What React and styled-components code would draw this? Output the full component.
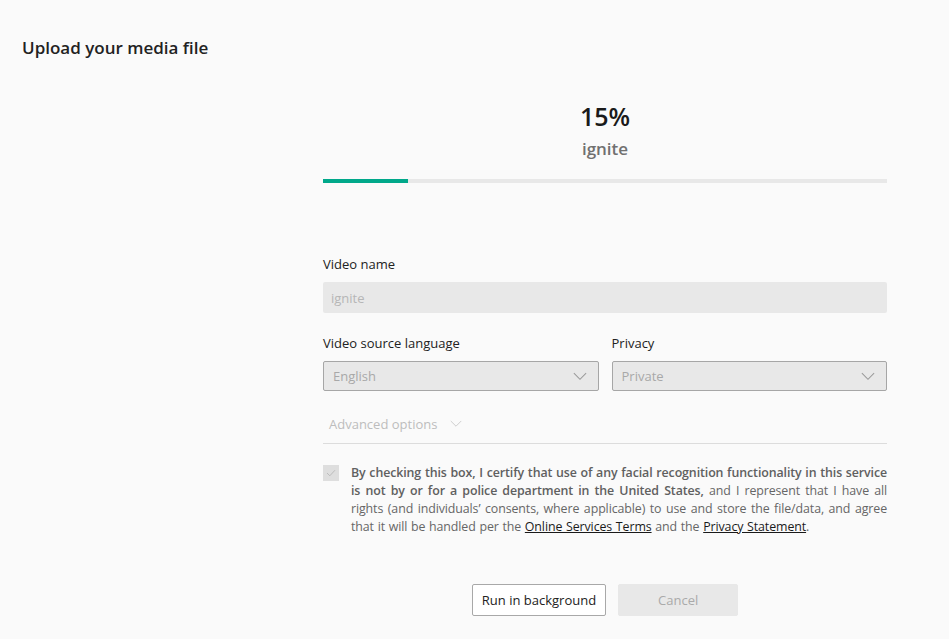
import React from "react";
import styled, { createGlobalStyle } from "styled-components";

const Global = createGlobalStyle`
  html, body {
    margin: 0;
    padding: 0;
    background: #fafafa;
    font-family: "Open Sans", "Noto Sans", sans-serif;
    color: #222;
  }
`;

const Page = styled.div`
  width: 949px;
  height: 639px;
  overflow: hidden;
  background: #fafafa;
`;

const Header = styled.h1`
  margin: 0;
  padding: 37px 0 0 22px;
  font-size: 17px;
  line-height: 22px;
  font-weight: 600;
  color: #222;
`;

const Main = styled.div`
  width: 564px;
  margin: 0 0 0 323px;
`;

const Status = styled.div`
  display: flex;
  flex-direction: column;
  align-items: center;
  padding-top: 40px;
`;

const Percent = styled.div`
  font-size: 25px;
  line-height: 34px;
  font-weight: 600;
  color: #1a1a1a;
`;

const FileName = styled.div`
  margin-top: 5px;
  font-size: 17px;
  line-height: 22px;
  font-weight: 600;
  color: #707070;
`;

const Track = styled.div`
  height: 4px;
  margin-top: 19px;
  background: #e8e8e8;
`;

const Fill = styled.div`
  height: 100%;
  background: #00a88a;
`;

const Form = styled.div`
  margin-top: 72px;
  display: flex;
  flex-direction: column;
`;

const Row = styled.div`
  display: grid;
  grid-template-columns: 1fr 1fr;
  gap: 13px;
  margin-top: ${(p) => p.$top || 0}px;
`;

const Field = styled.div`
  display: flex;
  flex-direction: column;
`;

const Label = styled.label`
  font-size: 13px;
  line-height: 18px;
  color: #222;
  margin-bottom: 9px;
`;

const Input = styled.div`
  height: 31px;
  box-sizing: border-box;
  padding: 0 8px;
  display: flex;
  align-items: center;
  background: #e8e8e8;
  border-radius: 2px;
  font-size: 13px;
  color: #b6b6b6;
`;

const Select = styled.div`
  height: 30px;
  box-sizing: border-box;
  padding: 0 11px 0 9px;
  display: flex;
  align-items: center;
  justify-content: space-between;
  background: #e8e8e8;
  border: 1px solid #a6a6a6;
  border-radius: 2px;
  font-size: 13px;
  color: #a8a8a8;
`;

const Chevron = ({ color = "#9a9a9a", size = 14 }) => (
  <svg width={size} height={size * 0.6} viewBox="0 0 16 9.6">
    <path d="M1 1.3 L8 8.3 L15 1.3" fill="none" stroke={color} strokeWidth="1.2" />
  </svg>
);

const Advanced = styled.div`
  margin-top: 24px;
  padding: 0 0 10px 6px;
  display: flex;
  align-items: center;
  gap: 13px;
  font-size: 13px;
  line-height: 18px;
  color: #bdbdbd;
  border-bottom: 1px solid #dcdcdc;
`;

const Consent = styled.div`
  margin-top: 20px;
  display: flex;
  gap: 12px;
  align-items: flex-start;
`;

const Box = styled.div`
  flex: none;
  width: 16px;
  height: 16px;
  margin-top: 1px;
  background: #dedede;
  display: flex;
  align-items: center;
  justify-content: center;
`;

const Text = styled.p`
  margin: 0;
  font-size: 12.4px;
  line-height: 18px;
  letter-spacing: -0.1px;
  word-spacing: 0.6px;
  color: #666;
  text-align: justify;

  b {
    font-weight: 600;
    color: #606060;
  }

  a {
    color: #1a1a1a;
    text-decoration: underline;
  }
`;

const Buttons = styled.div`
  margin-top: 48px;
  display: flex;
  justify-content: center;
  gap: 12px;
`;

const Button = styled.button`
  height: 32px;
  box-sizing: border-box;
  padding: 0 9px;
  min-width: ${(p) => (p.$disabled ? 120 : 0)}px;
  font-family: inherit;
  font-size: 13px;
  border-radius: 2px;
  background: ${(p) => (p.$disabled ? "#e8e8e8" : "#fff")};
  color: ${(p) => (p.$disabled ? "#aaa" : "#222")};
  border: 1px solid ${(p) => (p.$disabled ? "#e8e8e8" : "#a8a8a8")};
`;

export default function App() {
  const progress = 15;
  return (
    <Page>
      <Global />
      <Header>Upload your media file</Header>
      <Main>
        <Status>
          <Percent>{progress}%</Percent>
          <FileName>ignite</FileName>
        </Status>
        <Track>
          <Fill style={{ width: `${progress}%` }} />
        </Track>
        <Form>
          <Field>
            <Label>Video name</Label>
            <Input>ignite</Input>
          </Field>
          <Row $top={21}>
            <Field>
              <Label>Video source language</Label>
              <Select>
                English
                <Chevron />
              </Select>
            </Field>
            <Field>
              <Label>Privacy</Label>
              <Select>
                Private
                <Chevron />
              </Select>
            </Field>
          </Row>
          <Advanced>
            Advanced options
            <Chevron color="#c8c8c8" size={12} />
          </Advanced>
          <Consent>
            <Box>
              <svg width="10" height="8" viewBox="0 0 10 8">
                <path d="M1 4 L3.8 6.8 L9 1.2" fill="none" stroke="#bcbcbc" strokeWidth="1" />
              </svg>
            </Box>
            <Text>
              <b>
                By checking this box, I certify that use of any facial recognition
                functionality in this service is not by or for a police department
                in the United States,
              </b>{" "}
              and I represent that I have all rights (and individuals’ consents,
              where applicable) to use and store the file/data, and agree that it
              will be handled per the <a href="#">Online Services Terms</a> and
              the <a href="#">Privacy Statement</a>.
            </Text>
          </Consent>
          <Buttons>
            <Button>Run in background</Button>
            <Button $disabled>Cancel</Button>
          </Buttons>
        </Form>
      </Main>
    </Page>
  );
}
